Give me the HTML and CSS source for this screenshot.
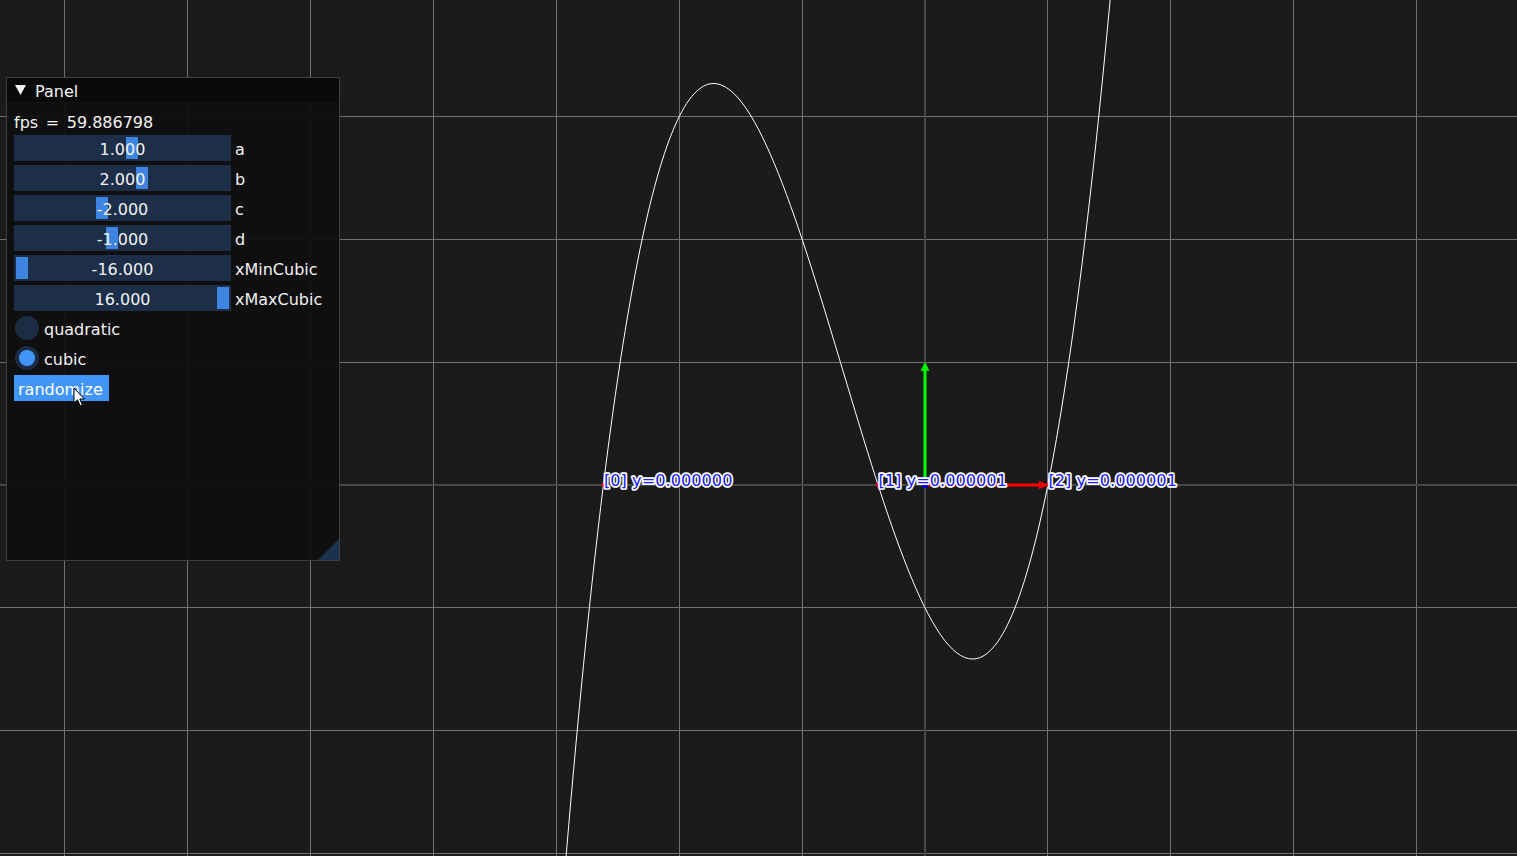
FILE: index.html
```html
<!DOCTYPE html>
<html>
<head>
<meta charset="utf-8">
<title>Panel</title>
<link rel="stylesheet" href="styles.css">
</head>
<body>
<svg class="canvas" width="1517" height="856" viewBox="0 0 1517 856">
  <g class="grid">
    <line x1="64.5" y1="0" x2="64.5" y2="856"/>
    <line x1="187.5" y1="0" x2="187.5" y2="856"/>
    <line x1="310.5" y1="0" x2="310.5" y2="856"/>
    <line x1="433.5" y1="0" x2="433.5" y2="856"/>
    <line x1="556.5" y1="0" x2="556.5" y2="856"/>
    <line x1="679.5" y1="0" x2="679.5" y2="856"/>
    <line x1="802.5" y1="0" x2="802.5" y2="856"/>
    <line x1="1047.5" y1="0" x2="1047.5" y2="856"/>
    <line x1="1170.5" y1="0" x2="1170.5" y2="856"/>
    <line x1="1293.5" y1="0" x2="1293.5" y2="856"/>
    <line x1="1416.5" y1="0" x2="1416.5" y2="856"/>
    <line x1="0" y1="116.5" x2="1517" y2="116.5"/>
    <line x1="0" y1="239.5" x2="1517" y2="239.5"/>
    <line x1="0" y1="362.5" x2="1517" y2="362.5"/>
    <line x1="0" y1="607.5" x2="1517" y2="607.5"/>
    <line x1="0" y1="730.5" x2="1517" y2="730.5"/>
    <line x1="0" y1="853.5" x2="1517" y2="853.5"/>
  </g>
  <g class="axis">
    <line x1="925" y1="0" x2="925" y2="856"/>
    <line x1="0" y1="485" x2="1517" y2="485"/>
  </g>
  <g transform="translate(925 485) scale(122.85 -122.85)">
    <path class="curve" d="M-3,-4 C-1.466667,15.933333 0.066667,-13.506667 1.6,5.016"/>
  </g>
  <line class="ax-y" x1="925" y1="485" x2="925" y2="366"/>
  <polygon class="ax-y-head" points="925,363.5 921.8,370 928.2,370"/>
  <line class="ax-x" x1="925" y1="485" x2="1044" y2="485"/>
  <polygon class="ax-x-head" points="1046.5,485 1039.5,481.8 1039.5,488.2"/>
  <circle class="root" cx="603.4" cy="485" r="2"/>
  <circle class="root" cx="878" cy="485" r="2"/>
  <circle class="root" cx="1047.8" cy="485" r="2"/>
  <circle class="origin" cx="925" cy="485" r="3"/>
  <text class="lbl" x="604" y="485.6">[0] y=0.000000</text>
  <text class="lbl" x="878.5" y="485.6">[1] y=0.000001</text>
  <text class="lbl" x="1048.5" y="485.6">[2] y=0.000001</text>
</svg>

<div class="panel">
  <div class="titlebar">
    <svg class="tri" width="11" height="10" viewBox="0 0 11 10"><polygon points="0,0 11,0 5.5,10"/></svg>
    <span class="title">Panel</span>
  </div>
  <div class="content">
    <div class="fps">fps = 59.886798</div>
    <div class="row">
      <div class="slider"><div class="grab" style="left:112px"></div><span class="val">1.000</span></div>
      <span class="lab">a</span>
    </div>
    <div class="row">
      <div class="slider"><div class="grab" style="left:122px"></div><span class="val">2.000</span></div>
      <span class="lab">b</span>
    </div>
    <div class="row">
      <div class="slider"><div class="grab" style="left:82px"></div><span class="val">-2.000</span></div>
      <span class="lab">c</span>
    </div>
    <div class="row">
      <div class="slider"><div class="grab" style="left:92px"></div><span class="val">-1.000</span></div>
      <span class="lab">d</span>
    </div>
    <div class="row">
      <div class="slider"><div class="grab" style="left:2px"></div><span class="val">-16.000</span></div>
      <span class="lab">xMinCubic</span>
    </div>
    <div class="row">
      <div class="slider"><div class="grab" style="left:203px"></div><span class="val">16.000</span></div>
      <span class="lab">xMaxCubic</span>
    </div>
    <div class="row">
      <div class="radio"><div class="circle"></div></div>
      <span class="lab">quadratic</span>
    </div>
    <div class="row">
      <div class="radio"><div class="circle"><div class="dot"></div></div></div>
      <span class="lab">cubic</span>
    </div>
    <div class="row">
      <div class="btn">randomize</div>
    </div>
  </div>
  <div class="grip"></div>
</div>

<svg class="cursor" width="14" height="21" viewBox="0 0 14 21">
  <path d="M1,1 L1,16 L4.5,12.8 L7.2,18.8 L9.4,17.9 L6.8,12 L11.5,12 Z"/>
</svg>
</body>
</html>
```

FILE: styles.css
```css
html, body {
  margin: 0;
  padding: 0;
  background: #1b1b1b;
  overflow: hidden;
  width: 1517px;
  height: 856px;
}

.canvas {
  display: block;
}

.grid line {
  stroke: #717171;
  stroke-width: 1;
}

.axis line {
  stroke: #474747;
  stroke-width: 2;
}

.curve {
  fill: none;
  stroke: #ffffff;
  stroke-width: 1;
  vector-effect: non-scaling-stroke;
}

.ax-y {
  stroke: #00ff00;
  stroke-width: 3;
}

.ax-y-head {
  fill: none;
  stroke: #00ff00;
  stroke-width: 1.5;
}

.ax-x {
  stroke: #ff0000;
  stroke-width: 3;
}

.ax-x-head {
  fill: none;
  stroke: #ff0000;
  stroke-width: 1.5;
}

.root {
  fill: #ff0000;
}

.origin {
  fill: #0000ff;
}

.lbl {
  font-family: "DejaVu Sans", sans-serif;
  font-size: 16.2px;
  fill: #1a1aff;
  stroke: #ffffff;
  stroke-width: 3.4;
  stroke-linejoin: round;
  paint-order: stroke;
}

.panel {
  position: absolute;
  left: 6px;
  top: 77px;
  width: 334px;
  height: 484px;
  box-sizing: border-box;
  border: 1px solid #3e3e44;
  background: rgba(15, 15, 15, 0.94);
  font-family: "DejaVu Sans", sans-serif;
  font-size: 16px;
  color: #f2f2f2;
}

.titlebar {
  height: 24px;
  background: #0a0a0a;
  display: flex;
  align-items: flex-start;
  padding-left: 8px;
}

.tri {
  display: block;
  margin-top: 7px;
  fill: #f2f2f2;
}

.title {
  margin-left: 9px;
  padding-top: 2px;
  line-height: 23px;
}

.content {
  padding: 3px 7px 0;
  display: flex;
  flex-direction: column;
  gap: 4px;
}

.fps {
  padding-top: 7px;
  line-height: 21px;
  margin-bottom: -2px;
  word-spacing: 2.5px;
}

.row {
  display: flex;
  align-items: stretch;
  gap: 4px;
  height: 26px;
}

.slider {
  position: relative;
  width: 217px;
  height: 26px;
  box-sizing: border-box;
  background: rgba(41, 74, 122, 0.54);
  text-align: center;
  padding-top: 3px;
  line-height: 23px;
}

.grab {
  position: absolute;
  top: 2px;
  width: 12px;
  height: 22px;
  background: #3d85e0;
}

.val {
  position: relative;
}

.lab {
  padding-top: 3px;
  line-height: 23px;
}

.radio {
  width: 26px;
  height: 26px;
  display: flex;
  align-items: center;
  justify-content: center;
}

.circle {
  width: 24px;
  height: 24px;
  border-radius: 50%;
  background: #1d2c45;
  display: flex;
  align-items: center;
  justify-content: center;
}

.dot {
  width: 16px;
  height: 16px;
  border-radius: 50%;
  background: #4296fa;
}

.btn {
  width: 95px;
  height: 26px;
  box-sizing: border-box;
  background: #4296fa;
  color: #ffffff;
  padding: 3px 0 0 4px;
  line-height: 23px;
}

.grip {
  position: absolute;
  right: 0;
  bottom: 0;
  width: 21px;
  height: 21px;
  background: #1c3050;
  clip-path: polygon(100% 0, 100% 100%, 0 100%);
}

.cursor {
  position: absolute;
  left: 73px;
  top: 387px;
}

.cursor path {
  fill: #ffffff;
  stroke: #000000;
  stroke-width: 1;
  stroke-linejoin: miter;
}
```
